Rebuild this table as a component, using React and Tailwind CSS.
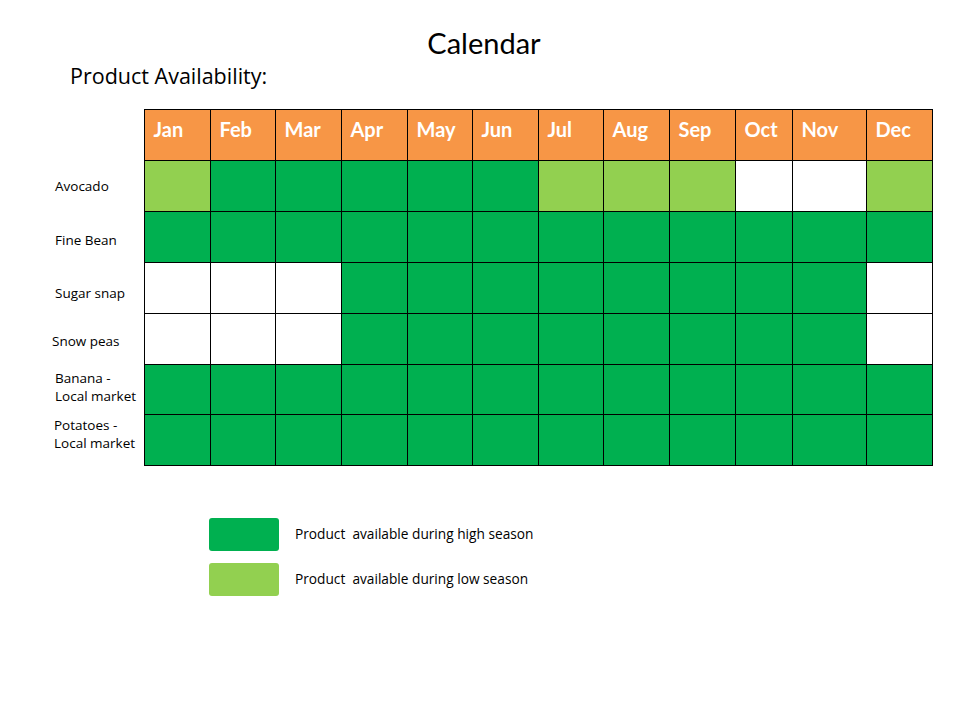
const months = ["Jan","Feb","Mar","Apr","May","Jun","Jul","Aug","Sep","Oct","Nov","Dec"];
const widths = [66,65,66,66,65,66,65,66,66,57,74,66];
const H = "bg-[#00B050]";
const L = "bg-[#92D050]";
const W = "bg-white";
const rows = [
  { label: ["Avocado"], cls: "pl-[55px]", h: "h-[51px]", cells: [L,H,H,H,H,H,L,L,L,W,W,L] },
  { label: ["Fine Bean"], cls: "pl-[55px] pt-[6px]", h: "h-[51px]", cells: [H,H,H,H,H,H,H,H,H,H,H,H] },
  { label: ["Sugar snap"], cls: "pl-[55px] pt-[10px]", h: "h-[51px]", cells: [W,W,W,H,H,H,H,H,H,H,H,W] },
  { label: ["Snow peas"], cls: "pl-[52px] pt-[4px]", h: "h-[51px]", cells: [W,W,W,H,H,H,H,H,H,H,H,W] },
  { label: ["Banana -", "Local market"], cls: "pl-[55px] pb-[6px]", h: "h-[50px]", cells: [H,H,H,H,H,H,H,H,H,H,H,H] },
  { label: ["Potatoes -", "Local market"], cls: "pl-[54px] pb-[13px]", h: "h-[51px]", cells: [H,H,H,H,H,H,H,H,H,H,H,H] },
];
const OS = { fontFamily: "'Open Sans', Lato, sans-serif" };

export default function App() {
  return (
    <div className="w-[960px] h-[720px] bg-white text-black relative overflow-hidden" style={{ fontFamily: "Lato, 'Open Sans', sans-serif" }}>
      <div className="pt-[26px] text-center text-[29px] leading-[34px] pl-[8px]">Calendar</div>
      <div className="pl-[70px] mt-[3px] text-[21.5px] leading-[26px]" style={OS}>Product Availability:</div>
      <table className="mt-[20px] border-collapse" style={{ tableLayout: "fixed" }}>
        <colgroup>
          <col style={{ width: 144 }} />
          {widths.map((w, i) => <col key={i} style={{ width: w }} />)}
        </colgroup>
        <thead>
          <tr className="h-[51px]">
            <th className="p-0"></th>
            {months.map((m) => (
              <th key={m} className="bg-[#F79646] border border-black text-white text-[20px] font-bold text-left align-top pl-[9px] pt-[7px] leading-[24px]">{m}</th>
            ))}
          </tr>
        </thead>
        <tbody>
          {rows.map((r, ri) => (
            <tr key={ri} className={r.h}>
              <td className={`p-0 text-[13.5px] leading-[18px] align-middle whitespace-nowrap ${r.cls}`} style={OS}>
                {r.label.map((t, i) => <div key={i}>{t}</div>)}
              </td>
              {r.cells.map((c, ci) => (
                <td key={ci} className={`border border-black p-0 ${c}`}></td>
              ))}
            </tr>
          ))}
        </tbody>
      </table>
      <div className="mt-[52px] ml-[209px] flex flex-col gap-[12px]" style={OS}>
        <div className="flex items-center">
          <div className="w-[70px] h-[33px] rounded-[3px] bg-[#00B050]"></div>
          <div className="ml-[16px] text-[13.7px]">Product&nbsp; available during high season</div>
        </div>
        <div className="flex items-center">
          <div className="w-[70px] h-[33px] rounded-[3px] bg-[#92D050]"></div>
          <div className="ml-[16px] text-[13.7px]">Product&nbsp; available during low season</div>
        </div>
      </div>
    </div>
  );
}
